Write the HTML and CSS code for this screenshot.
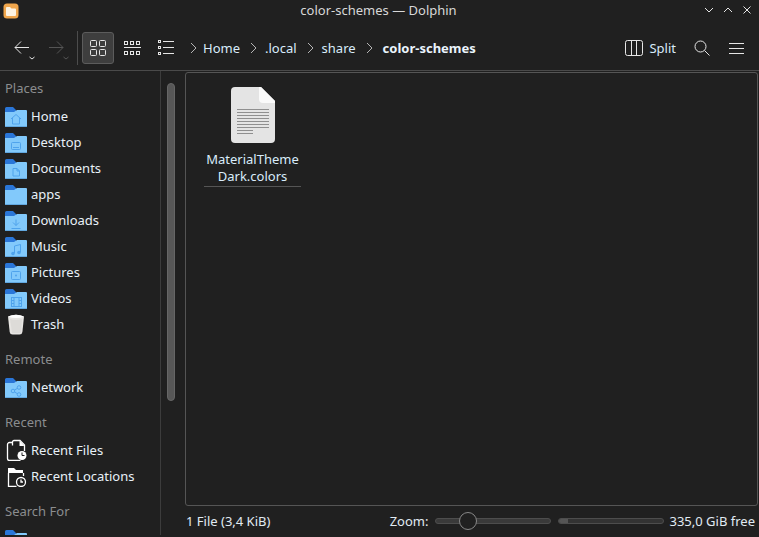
FILE: index.html
```html
<!DOCTYPE html>
<html lang="en">
<head>
<meta charset="utf-8">
<title>color-schemes — Dolphin</title>
<link rel="stylesheet" href="styles.css">
</head>
<body>
<svg class="defs" width="0" height="0" aria-hidden="true">
  <symbol id="folder" viewBox="0 0 22 22">
    <path d="M0 3.500A1.500 1.500 0 0 1 1.500 2H8l3 3v4H0z" fill="#2a76d8"/>
    <path d="M0 7h9l3-2h9a1 1 0 0 1 1 1v15a1 1 0 0 1-1 1H1a1 1 0 0 1-1-1z" fill="#82c9fb"/>
    <path d="M0 21h22v.3a.7.7 0 0 1-.7.7H.7a.7.7 0 0 1-.7-.7z" fill="#62a8e0"/>
  </symbol>
</svg>

<header class="titlebar">
  <svg class="app-icon" width="16" height="16" viewBox="0 0 16 16">
    <rect x="0.500" y="0.500" width="15" height="15" rx="3.500" fill="#f0a64c"/>
    <path d="M3 5a1 1 0 0 1 1-1h3l1.500 1.500H12a1 1 0 0 1 1 1V12a1 1 0 0 1-1 1H4a1 1 0 0 1-1-1z" fill="#fdf3e2"/>
  </svg>
  <div class="title">color-schemes — Dolphin</div>
  <div class="win-controls">
    <svg width="10" height="10" viewBox="0 0 10 10"><path d="M1 3l4 4 4-4" class="ln"/></svg>
    <svg width="10" height="10" viewBox="0 0 10 10"><path d="M1 7l4-4 4 4" class="ln"/></svg>
    <svg width="10" height="10" viewBox="0 0 10 10"><path d="M1.500 1.500l7 7m0-7l-7 7" class="ln"/></svg>
  </div>
</header>

<nav class="toolbar">
  <div class="nav-btn">
    <svg width="24" height="26" viewBox="0 0 24 26"><path d="M15 12.500H1M7 6.500l-6 6 6 6" class="ln"/><path d="M15.500 22l2.500 2 2.500-2" class="ln"/></svg>
  </div>
  <div class="nav-btn fwd">
    <svg width="24" height="26" viewBox="0 0 24 26"><path d="M1 12.500h14M9 6.500l6 6-6 6" class="ln dim"/><path d="M15.500 22l2.500 2 2.500-2" class="ln dim"/></svg>
  </div>
  <div class="tb-sep"></div>
  <div class="view-btn active">
    <svg width="18" height="18" viewBox="0 0 18 18">
      <rect x="1.500" y="1.500" width="6" height="6" rx="1" class="ln"/><rect x="10.500" y="1.500" width="6" height="6" rx="1" class="ln"/>
      <rect x="1.500" y="10.500" width="6" height="6" rx="1" class="ln"/><rect x="10.500" y="10.500" width="6" height="6" rx="1" class="ln"/>
    </svg>
  </div>
  <div class="view-btn">
    <svg width="18" height="18" viewBox="0 0 18 18">
      <rect x="1.500" y="2.500" width="3" height="3" class="ln"/><rect x="7.500" y="2.500" width="3" height="3" class="ln"/><rect x="13.500" y="2.500" width="3" height="3" class="ln"/>
      <path d="M1 8.500h17" class="ln"/>
      <rect x="1.500" y="12.500" width="3" height="3" class="ln"/><rect x="7.500" y="12.500" width="3" height="3" class="ln"/><rect x="13.500" y="12.500" width="3" height="3" class="ln"/>
    </svg>
  </div>
  <div class="view-btn">
    <svg width="18" height="18" viewBox="0 0 18 18">
      <rect x="1.500" y="1.500" width="2" height="2" class="ln"/><path d="M6 2.500h11" class="ln"/>
      <rect x="1.500" y="7.500" width="2" height="2" class="ln"/><path d="M6 8.500h11" class="ln"/>
      <rect x="1.500" y="13.500" width="2" height="2" class="ln"/><path d="M6 14.500h11" class="ln"/>
    </svg>
  </div>
  <div class="crumbs">
    <svg class="chev" width="7" height="12" viewBox="0 0 7 12"><path d="M1 1l5 5-5 5" class="ln mid"/></svg>
    <span class="crumb home">Home</span>
    <svg class="chev" width="7" height="12" viewBox="0 0 7 12"><path d="M1 1l5 5-5 5" class="ln mid"/></svg>
    <span class="crumb local">.local</span>
    <svg class="chev" width="7" height="12" viewBox="0 0 7 12"><path d="M1 1l5 5-5 5" class="ln mid"/></svg>
    <span class="crumb share">share</span>
    <svg class="chev" width="7" height="12" viewBox="0 0 7 12"><path d="M1 1l5 5-5 5" class="ln mid"/></svg>
    <span class="crumb current">color-schemes</span>
  </div>
  <div class="tools">
    <svg class="split-icon" width="18" height="16" viewBox="0 0 18 16"><rect x="0.500" y="0.500" width="17" height="15" rx="2" class="ln"/><path d="M6.500 1v14M11.500 1v14" class="ln"/></svg>
    <span class="split-label">Split</span>
    <svg class="search-icon" width="16" height="16" viewBox="0 0 16 16"><circle cx="6.500" cy="6.500" r="5.500" class="ln"/><path d="M10.500 10.500l5 5" class="ln"/></svg>
    <svg class="menu-icon" width="15" height="12" viewBox="0 0 15 12"><path d="M0 1.500h15M0 6.500h15M0 11.500h15" class="ln"/></svg>
  </div>
</nav>

<div class="body">
  <aside class="sidebar">
    <h2 class="group-label">Places</h2>
    <ul class="group">
      <li class="row"><span class="ficon"><svg width="22" height="22"><use href="#folder"/></svg><svg class="emblem" width="22" height="22" viewBox="0 0 22 22"><path d="M6 14l5-4.500 5 4.500M7.500 13v6h7v-6" class="em"/></svg></span>Home</li>
      <li class="row"><span class="ficon"><svg width="22" height="22"><use href="#folder"/></svg><svg class="emblem" width="22" height="22" viewBox="0 0 22 22"><rect x="6.500" y="11.500" width="9" height="7" rx="1" class="em"/><path d="M8 16.500h6" class="em"/></svg></span>Desktop</li>
      <li class="row"><span class="ficon"><svg width="22" height="22"><use href="#folder"/></svg><svg class="emblem" width="22" height="22" viewBox="0 0 22 22"><path d="M8 11.500h4l2.500 2.500v5H8zM12 11.500V14h2.500" class="em"/></svg></span>Documents</li>
      <li class="row"><span class="ficon"><svg width="22" height="22"><use href="#folder"/></svg></span>apps</li>
      <li class="row"><span class="ficon"><svg width="22" height="22"><use href="#folder"/></svg><svg class="emblem" width="22" height="22" viewBox="0 0 22 22"><path d="M11 10.500v6M8 13.500l3 3 3-3M6.500 19.500h9" class="em"/></svg></span>Downloads</li>
      <li class="row"><span class="ficon"><svg width="22" height="22"><use href="#folder"/></svg><svg class="emblem" width="22" height="22" viewBox="0 0 22 22"><path d="M9.500 18V11l6-1.500V17" class="em"/><circle cx="8" cy="18.500" r="1.800" class="em-fill"/><circle cx="14" cy="17.500" r="1.800" class="em-fill"/></svg></span>Music</li>
      <li class="row"><span class="ficon"><svg width="22" height="22"><use href="#folder"/></svg><svg class="emblem" width="22" height="22" viewBox="0 0 22 22"><rect x="6.500" y="10.500" width="9" height="8" rx="1" class="em"/><circle cx="11" cy="14.500" r="1" class="em-fill"/></svg></span>Pictures</li>
      <li class="row"><span class="ficon"><svg width="22" height="22"><use href="#folder"/></svg><svg class="emblem" width="22" height="22" viewBox="0 0 22 22"><rect x="6.500" y="10.500" width="10" height="9" class="em"/><path d="M9 10.500v9M14 10.500v9M6.500 13.500H9M6.500 16.500H9M14 13.500h2.500M14 16.500h2.500" class="em"/></svg></span>Videos</li>
      <li class="row"><span class="ficon"><svg width="22" height="22" viewBox="0 0 22 22"><path d="M3 3.500q8-3.500 16 0l-1.600 15.500q-.3 2.500-2.900 2.500h-6.900q-2.600 0-2.900-2.500z" fill="#e8e6e3"/><path d="M3 3.500q8-3.500 16 0-8 3-16 0z" fill="#fff"/><path d="M5 6q6 2 12 0l-1 14h-9z" fill="#d6d4d0" opacity=".6"/></svg></span>Trash</li>
    </ul>
    <h2 class="group-label">Remote</h2>
    <ul class="group">
      <li class="row"><span class="ficon"><svg width="22" height="22"><use href="#folder"/></svg><svg class="emblem" width="22" height="22" viewBox="0 0 22 22"><circle cx="8" cy="15" r="1.800" class="em"/><circle cx="14" cy="11.500" r="1.800" class="em"/><circle cx="14" cy="18.500" r="1.800" class="em"/><path d="M9.500 14l3-1.700M9.500 16l3 1.700" class="em"/></svg></span>Network</li>
    </ul>
    <h2 class="group-label">Recent</h2>
    <ul class="group">
      <li class="row"><span class="ficon"><svg width="22" height="22" viewBox="0 0 22 22"><path d="M7.500 3.500h-3a2 2 0 0 0-2 2v14a2 2 0 0 0 2 2h11" class="wh"/><path d="M7.500 6.500V3a1.500 1.500 0 0 1 1.500-1.500h6l4.500 4.500v6" class="wh"/><path d="M14.500 1.500V7h5z" fill="#fff"/><circle cx="17" cy="16.500" r="4.500" fill="#fff"/><path d="M17 13.500v3h2.500" stroke="#202020" fill="none"/></svg></span>Recent Files</li>
      <li class="row"><span class="ficon"><svg width="22" height="22" viewBox="0 0 22 22"><path d="M3 3h6l2 2h7v3H3z" fill="#fff"/><path d="M3.500 8v13.500h8M18.500 8v3" class="wh"/><circle cx="16" cy="17" r="4.500" class="wh"/><path d="M16 14.500V17h2" class="wh"/></svg></span>Recent Locations</li>
    </ul>
    <h2 class="group-label">Search For</h2>
    <ul class="group">
      <li class="row"><span class="ficon"><svg width="22" height="22"><use href="#folder"/></svg></span></li>
    </ul>
  </aside>
  <div class="scroll-col"><div class="scroll-thumb"></div></div>
  <main class="content">
    <section class="frame">
      <figure class="file">
        <svg class="file-icon" width="44" height="56" viewBox="0 0 44 56">
          <path d="M4 0h26l14 14v38a4 4 0 0 1-4 4H4a4 4 0 0 1-4-4V4a4 4 0 0 1 4-4z" fill="#e4e4e4"/>
          <path d="M28 0h2l14 14v2H32a4 4 0 0 1-4-4z" fill="#fafafa"/>
          <path d="M6 22.500h32M6 25.500h32M6 28.500h32M6 31.500h32M6 34.500h32M6 37.500h32M6 40.500h32M6 43.500h16M6 46.500h16" stroke="#8f8f8f" fill="none"/>
        </svg>
        <figcaption class="file-name">MaterialTheme<br>Dark.colors</figcaption>
      </figure>
    </section>
    <footer class="status">
      <span class="status-text">1 File (3,4 KiB)</span>
      <span class="zoom-label">Zoom:</span>
      <div class="slider"><span class="knob"></span></div>
      <div class="capacity"><span class="capacity-fill"></span></div>
      <span class="free">335,0 GiB free</span>
    </footer>
  </main>
</div>
</body>
</html>
```
FILE: styles.css
```css
* { box-sizing: border-box; }
html, body { margin: 0; height: 100%; }
body {
  width: 759px;
  height: 537px;
  overflow: hidden;
  display: flex;
  flex-direction: column;
  background: #202020;
  color: #eff0f1;
  font: 13px/18px "Noto Sans", sans-serif;
}
.defs { position: absolute; }
.ln { fill: none; stroke: #e6e6e6; stroke-width: 1; }
.ln.mid { stroke: #b4b4b4; }
.ln.dim { stroke: #555; }
.em { fill: none; stroke: #4fa3ec; stroke-width: 1; }
.em-fill { fill: #4fa3ec; }
.wh { fill: none; stroke: #fff; stroke-width: 1.300; }

.titlebar {
  height: 30px;
  flex: none;
  display: flex;
  align-items: center;
  padding: 0 7px 10px 3px;
}
.app-icon { flex: none; margin-top: 1px; }
.title { flex: 1; text-align: center; color: #d8d8d8; padding-left: 34px; }
.win-controls { display: flex; gap: 9px; }

.toolbar {
  height: 41px;
  flex: none;
  display: flex;
  align-items: center;
  border-bottom: 1px solid #4a4a4a;
  padding-bottom: 4px;
}
.nav-btn { flex: none; height: 26px; width: 39px; padding-left: 14px; }
.nav-btn svg { display: block; }
.nav-btn.fwd { padding-left: 9px; width: 37px; }
.tb-sep { width: 1px; height: 34px; background: #4c4c4c; margin: 0 4px 0 1px; }
.view-btn {
  width: 33px;
  height: 32px;
  margin-right: 1px;
  display: flex;
  align-items: center;
  justify-content: center;
  border: 1px solid transparent;
  border-radius: 3px;
}
.view-btn.active { width: 32px; background: #3e3e3e; border-color: #5c5c5c; }
.crumbs { display: flex; align-items: center; margin-left: 7px; }
.chev { flex: none; }
.crumb { color: #d9ecfb; margin: 0 10px 0 8px; }
.crumb.home { margin-left: 6px; }
.crumb.current { font-weight: 700; margin-left: 10px; color: #eaf4fc; }
.tools { margin-left: auto; display: flex; align-items: center; padding-right: 15px; }
.split-label { margin: 0 18px 0 6px; color: #d9ecfb; }
.menu-icon { margin-left: 19px; }

.body { flex: 1; display: flex; min-height: 0; }
.sidebar {
  width: 161px;
  flex: none;
  border-right: 1px solid #3c3c3c;
  padding-top: 4px;
  margin-bottom: 2px;
  overflow: hidden;
}
.group-label {
  margin: 0 0 2px;
  padding-left: 5px;
  height: 26px;
  line-height: 26px;
  font-size: 13px;
  font-weight: 400;
  color: #8b8d8f;
}
.group { list-style: none; margin: 0 0 9px; padding: 0; }
.row {
  height: 26px;
  display: flex;
  align-items: center;
  padding-left: 5px;
  white-space: nowrap;
  color: #e8f1f8;
}
.ficon { width: 22px; height: 22px; flex: none; margin-right: 4px; position: relative; }
.ficon svg { display: block; }
.emblem { position: absolute; left: 0; top: 0; }

.scroll-col { width: 24px; flex: none; padding: 12px 0 0 6px; }
.scroll-thumb {
  width: 8px;
  height: 318px;
  border-radius: 4px;
  background: #575757;
  border: 1px solid #666;
}

.content { flex: 1; display: flex; flex-direction: column; min-width: 0; padding-right: 1px; }
.frame {
  height: 434px;
  margin-top: 1px;
  border: 1px solid #555;
  border-radius: 3px;
  background: #202020;
  padding: 14px 0 0 18px;
}
.file { margin: 0; width: 97px; display: flex; flex-direction: column; align-items: center; }
.file-icon { display: block; }
.file-name {
  margin-top: 8px;
  width: 100%;
  height: 36px;
  text-align: center;
  line-height: 17px;
  color: #d9ecfb;
  border-bottom: 1px solid #555;
}

.status { flex: 1; display: flex; align-items: center; padding: 0 3px 0 1px; margin-top: -1px; color: #e0ebf3; }
.status-text { flex: 1; }
.zoom-label { margin-right: 7px; }
.slider {
  width: 116px;
  height: 6px;
  border: 1px solid #4d4d4d;
  border-radius: 3px;
  background: #3a3a3a;
  position: relative;
  margin-right: 7px;
}
.knob {
  position: absolute;
  left: 23px;
  top: -7px;
  width: 18px;
  height: 18px;
  border: 1px solid #888;
  border-radius: 50%;
  background: #202020;
}
.capacity {
  width: 106px;
  height: 6px;
  border: 1px solid #4d4d4d;
  border-radius: 3px;
  background: #333;
  margin-right: 5px;
  overflow: hidden;
}
.capacity-fill { display: block; width: 9px; height: 100%; background: #555; }
.free { white-space: nowrap; }
```
